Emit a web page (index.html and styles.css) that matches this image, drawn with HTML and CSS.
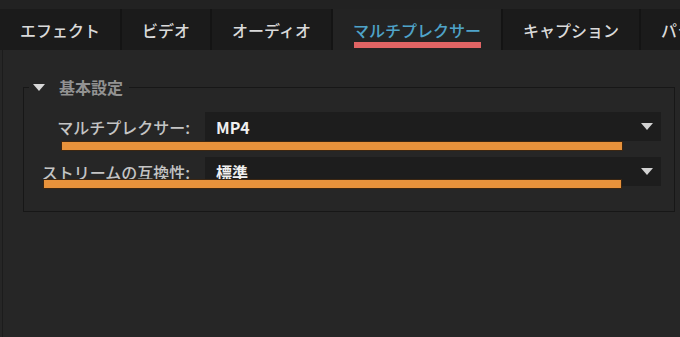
FILE: index.html
```html
<!DOCTYPE html>
<html lang="ja">
<head>
    <meta charset="UTF-8">
    <title>マルチプレクサー設定</title>
    <link rel="stylesheet" href="styles.css">
</head>
<body>
    <div class="top-strip"></div>

    <!-- タブ -->
    <nav class="tabs">
        <div class="tab">エフェクト</div>
        <div class="tab">ビデオ</div>
        <div class="tab">オーディオ</div>
        <div class="tab active"><span>マルチプレクサー</span></div>
        <div class="tab">キャプション</div>
        <div class="tab">パラメーター</div>
    </nav>

    <div class="panel">
        <fieldset class="group">
            <legend><span class="caret"></span>基本設定</legend>

            <div class="rows">
                <label class="label">マルチプレクサー:</label>
                <div class="select">MP4<span class="arrow"></span></div>

                <label class="label">ストリームの互換性:</label>
                <div class="select">標準<span class="arrow"></span></div>
            </div>
        </fieldset>

        <!-- 強調マーカー -->
        <div class="marker marker-1"></div>
        <div class="marker marker-2"></div>
    </div>
</body>
</html>
```

FILE: styles.css
```css
/* 全体 */
body {
    margin: 0;
    height: 337px;
    overflow: hidden;
    background: #262626;
    font-family: "Noto Sans CJK JP", "Noto Sans", sans-serif;
    font-size: 16px;
}

.top-strip {
    height: 9px;
    background: #222222;
}

.tabs {
    display: flex;
    height: 41px;
    background: #1b1b1b;
    white-space: nowrap;
    overflow: hidden;
}

.tab {
    position: relative;
    display: flex;
    align-items: center;
    padding: 0 20px;
    color: #dadada;
    font-weight: 500;
    border-right: 2px solid #141414;
    flex-shrink: 0;
}

.tab.active {
    background: #232323;
    color: #4fa3c9;
}

.tab.active span::after {
    content: "";
    position: absolute;
    left: 21px;
    right: 20px;
    bottom: 2px;
    height: 6px;
    background: #e06464;
}

.panel {
    position: relative;
    height: 287px;
    margin-left: 2px;
    border-left: 1px solid #1c1c1c;
    overflow: hidden;
}

.group {
    margin: 27px 5px 0 20px;
    padding: 15px 13px 25px 0;
    border: 1px solid #171717;
}

.group legend {
    display: flex;
    align-items: center;
    margin-left: 5px;
    padding: 0 6px 0 4px;
    color: #929292;
    font-weight: bold;
    line-height: 20px;
}

.caret {
    width: 0;
    height: 0;
    margin-right: 14px;
    border-left: 6px solid transparent;
    border-right: 6px solid transparent;
    border-top: 7px solid #d8d8d8;
}

.rows {
    display: grid;
    grid-template-columns: 166px 1fr;
    column-gap: 15px;
    row-gap: 16px;
    align-items: center;
}

.label {
    text-align: right;
    color: #c4c4c4;
    font-weight: 500;
}

.select {
    display: flex;
    align-items: center;
    justify-content: space-between;
    height: 29px;
    padding: 0 8px 0 11px;
    background: #1d1d1d;
    color: #f0f0f0;
    font-weight: bold;
}

.arrow {
    width: 0;
    height: 0;
    border-left: 6px solid transparent;
    border-right: 6px solid transparent;
    border-top: 7px solid #d2d2d2;
}

/* オレンジの下線マーカー */
.marker {
    position: absolute;
    height: 8px;
    background: #e8923b;
    box-shadow: 0 0 0 1px #3b2612;
}

.marker-1 {
    left: 59px;
    width: 560px;
    top: 92px;
}

.marker-2 {
    left: 41px;
    width: 577px;
    top: 130px;
}
```
